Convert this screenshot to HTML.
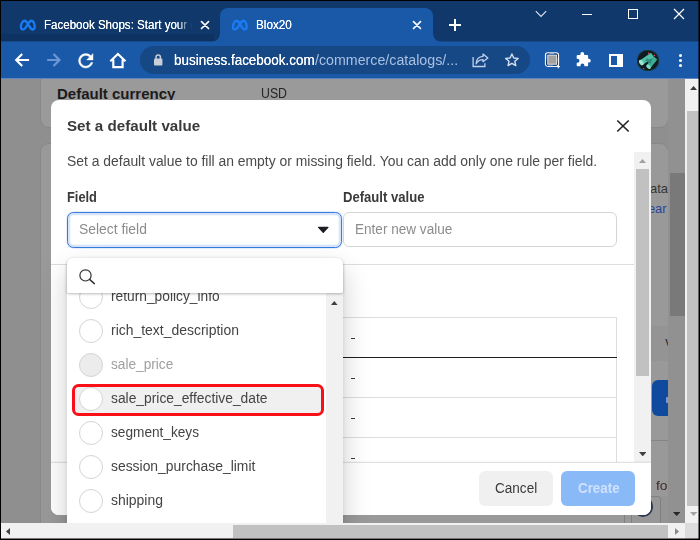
<!DOCTYPE html>
<html>
<head>
<meta charset="utf-8">
<title>Blox20</title>
<style>
html,body{margin:0;padding:0;}
body{width:700px;height:540px;overflow:hidden;background:#8f8f8f;font-family:"Liberation Sans",sans-serif;position:relative;}
.abs{position:absolute;}
.t{position:absolute;white-space:nowrap;}
.hl{position:absolute;height:1px;background:#dddddd;}
.dash{position:absolute;left:351.3px;width:3.8px;height:1px;background:#3a3a3a;}
.radio{position:absolute;left:79px;width:24px;height:24px;box-sizing:border-box;border:1px solid #d4d4d4;border-radius:50%;background:#fff;}
</style>
</head>
<body>

<!-- page behind overlay -->
<div class="abs" style="left:0;top:78px;width:700px;height:462px;background:#8f8f8f;"></div>
<div class="abs" style="left:41px;top:60px;width:627px;height:67px;background:#9a9a9a;border-radius:8px;box-shadow:0 0 0 1px #888888;"></div>
<div class="abs" style="left:41px;top:144px;width:627px;height:420px;background:#999999;border-radius:8px;box-shadow:0 0 0 1px #888888;"></div>
<div class="t" style="left:57px;top:84px;font-size:15px;line-height:20px;color:#1c1a1a;font-weight:bold;">Default currency</div>
<div class="t" style="left:261px;top:84px;font-size:14px;line-height:18px;color:#262626;transform:scaleX(0.88);transform-origin:0 0;">USD</div>
<div class="t" style="left:650px;top:181.4px;font-size:13px;line-height:16px;color:#363636;">ata</div>
<div class="t" style="left:647.9px;top:200.8px;font-size:13px;line-height:16px;color:#27489a;">ear</div>
<div class="abs" style="left:651px;top:325.6px;width:17px;height:35.4px;background:#949494;"></div>
<div class="t" style="left:665.2px;top:333.5px;font-size:13px;line-height:16px;color:#262626;">v</div>
<div class="abs" style="left:651.5px;top:380px;width:40px;height:36px;background:#0f4a9e;border-radius:6px 0 0 6px;"></div>
<div class="abs" style="left:651px;top:440px;width:17px;height:1px;background:#858585;"></div><div class="abs" style="left:665.5px;top:397px;width:3px;height:6px;background:#7d9bd0;border-radius:1px;"></div>
<div class="t" style="left:655.8px;top:478.1px;font-size:13px;line-height:16px;color:#40292a;transform:scaleX(1.06);transform-origin:0 0;">fo</div>
<div class="abs" style="left:631px;top:495.5px;width:29.5px;height:30px;border:1px solid #808080;border-radius:0 3px 0 0;box-sizing:border-box;background:#979797;"></div>
<div class="abs" style="left:661px;top:496px;width:7px;height:30px;background:#949494;"></div>
<div class="abs" style="left:624px;top:514px;width:1px;height:10px;background:#808080;"></div>
<div class="abs" style="left:632.7px;top:496.2px;width:20.6px;height:20.6px;border-radius:50%;border:2.6px solid #2e3654;box-sizing:border-box;background:#7d86a3;"></div>
<div class="abs" style="left:668px;top:78px;width:17px;height:445px;background:#919191;"></div>
<div class="abs" style="left:670px;top:173px;width:15px;height:142.5px;background:#797979;"></div>
<svg class="abs" style="left:673px;top:512px" width="7.4" height="4" viewBox="0 0 7.4 4"><path d="M0 0h7.4L3.7 4z" fill="#262626"/></svg>
<div class="abs" style="left:685px;top:78px;width:14px;height:445px;background:#f1f1f1;"></div>
<svg class="abs" style="left:689.9px;top:85.8px" width="7.2" height="4.1" viewBox="0 0 7.2 4.1"><path d="M0 4.1h7.2L3.6 0z" fill="#3a3a3a"/></svg>
<div class="abs" style="left:687px;top:111px;width:12px;height:395px;background:#c2c2c2;"></div>
<svg class="abs" style="left:690px;top:512px" width="7.2" height="4" viewBox="0 0 7.2 4"><path d="M0 0h7.2L3.6 4z" fill="#a3a3a3"/></svg>
<div class="abs" style="left:0;top:523px;width:685px;height:16px;background:#f1f1f1;"></div>
<div class="abs" style="left:685px;top:523px;width:14px;height:16px;background:#dcdcdc;"></div>
<svg class="abs" style="left:6px;top:527.9px" width="4.1" height="7" viewBox="0 0 4.1 7"><path d="M4.1 0v7L0 3.5z" fill="#404040"/></svg>
<div class="abs" style="left:233px;top:525px;width:435px;height:13px;background:#c1c1c1;"></div>
<svg class="abs" style="left:675px;top:528.2px" width="4.1" height="7" viewBox="0 0 4.1 7"><path d="M0 0v7l4.1-3.5z" fill="#8a8a8a"/></svg>
<!-- chrome -->
<div class="abs" style="left:0;top:0;width:700px;height:41px;background:#10386a;"></div>
<div class="abs" style="left:0;top:41px;width:700px;height:37px;background:#1a59a8;"></div>
<div class="abs" style="left:0;top:78px;width:700px;height:1px;background:#5f86bf;"></div>
<div class="abs" style="left:0;top:34px;width:214px;height:7px;background:#0e3362;"></div>
<div class="abs" style="left:0;top:41px;width:700px;height:1px;background:#154989;"></div>
<div class="abs" style="left:220px;top:8px;width:212.6px;height:34px;background:#1a59a8;border-radius:8px 8px 0 0;"></div>
<div class="abs" style="left:212px;top:33.5px;width:8px;height:8px;background:radial-gradient(circle at 0 0,rgba(26,89,168,0) 7.4px,#1a59a8 8.1px);"></div>
<div class="abs" style="left:432.6px;top:33.5px;width:8px;height:8px;background:radial-gradient(circle at 100% 0,rgba(26,89,168,0) 7.4px,#1a59a8 8.1px);"></div>
<svg class="abs" style="left:18.91px;top:19.29px" width="18.03" height="12.78" viewBox="0 0 20.6 14.6"><path d="M2.2 9.2C2.2 5.6 4 2 6.3 2c1.6 0 2.7 1.3 4 3.7C11.6 3.3 12.7 2 14.2 2c2.1 0 3.8 3.3 3.8 7 0 1.9-.9 3-2.3 3-1.5 0-2.4-1-4-3.8L10.3 5.7 8.6 8.3C7.1 10.9 6.1 12 4.6 12 3.1 12 2.2 10.9 2.2 9.2Z" fill="none" stroke="#1a7cf5" stroke-width="2.6" stroke-linejoin="round"/></svg>
<div class="t" style="left:43.6px;top:16.5px;font-size:12px;line-height:16px;color:#fff;transform:scaleX(0.962);transform-origin:0 0;width:158px;overflow:hidden;-webkit-mask-image:linear-gradient(90deg,#000 138px,transparent 154px);text-shadow:0 0 0.4px #fff;">Facebook Shops: Start your o</div>
<svg class="abs" style="left:200px;top:20px" width="10" height="10" viewBox="0 0 10 10"><path d="M1.5 1.7l7 6.8M8.5 1.7l-7 6.8" stroke="#fff" stroke-width="1.7" stroke-linecap="round"/></svg>
<svg class="abs" style="left:231.31px;top:19.29px" width="18.03" height="12.78" viewBox="0 0 20.6 14.6"><path d="M2.2 9.2C2.2 5.6 4 2 6.3 2c1.6 0 2.7 1.3 4 3.7C11.6 3.3 12.7 2 14.2 2c2.1 0 3.8 3.3 3.8 7 0 1.9-.9 3-2.3 3-1.5 0-2.4-1-4-3.8L10.3 5.7 8.6 8.3C7.1 10.9 6.1 12 4.6 12 3.1 12 2.2 10.9 2.2 9.2Z" fill="none" stroke="#1a7cf5" stroke-width="2.6" stroke-linejoin="round"/></svg>
<div class="t" style="left:255.8px;top:16.5px;font-size:12px;line-height:16px;color:#fff;transform:scaleX(0.975);transform-origin:0 0;text-shadow:0 0 0.4px #fff;">Blox20</div>
<svg class="abs" style="left:412px;top:20px" width="10" height="10" viewBox="0 0 10 10"><path d="M1.5 1.7l7 6.8M8.5 1.7l-7 6.8" stroke="#fff" stroke-width="1.7" stroke-linecap="round"/></svg>
<svg class="abs" style="left:447.5px;top:18px" width="14" height="14" viewBox="0 0 14 14"><path d="M7 1v12M1 7h12" stroke="#fff" stroke-width="2"/></svg>
<svg class="abs" style="left:534px;top:9px" width="14" height="10" viewBox="0 0 14 10"><path d="M1.8 2.2l5.2 5.2 5.2-5.2" fill="none" stroke="#dfe8f3" stroke-width="1.1"/></svg>
<div class="abs" style="left:582px;top:14px;width:10px;height:1px;background:#fff;"></div>
<div class="abs" style="left:628px;top:9px;width:8px;height:8px;border:1.2px solid #fff;"></div>
<svg class="abs" style="left:673px;top:8px" width="12" height="12" viewBox="0 0 12 12"><path d="M1 1l10 10M11 1L1 11" stroke="#fff" stroke-width="1.2"/></svg>
<svg class="abs" style="left:14px;top:52px" width="16" height="16" viewBox="0 0 16 16"><path d="M15.1 8H2.5M8.2 2L2.2 8l6 6" fill="none" stroke="#fff" stroke-width="2.15"/></svg>
<svg class="abs" style="left:46px;top:52px" width="16" height="16" viewBox="0 0 16 16"><path d="M1.2 8h12.2M7.5 2l6 6-6 6" fill="none" stroke="#6b97d6" stroke-width="2.15"/></svg>
<svg class="abs" style="left:75.2px;top:49.6px" width="21.6" height="21.6" viewBox="0 0 24 24"><path d="M17.65 6.35C16.2 4.9 14.21 4 12 4c-4.42 0-7.99 3.58-7.99 8s3.57 8 7.99 8c3.73 0 6.84-2.55 7.73-6h-2.08c-.82 2.33-3.04 4-5.65 4-3.31 0-6-2.69-6-6s2.69-6 6-6c1.66 0 3.14.69 4.22 1.78L13 11h7V4l-2.35 2.35z" fill="#fff" stroke="#fff" stroke-width="0.45"/></svg>
<svg class="abs" style="left:109px;top:51.5px" width="18" height="17" viewBox="0 0 18 17"><path d="M1.3 9.2L8.9 2l7.6 7.2M4.3 7.4V15.1h9.3V7.4" fill="none" stroke="#fff" stroke-width="2.15"/></svg>
<div class="abs" style="left:140px;top:46px;width:390px;height:28px;border-radius:14px;background:#164886;"></div>
<svg class="abs" style="left:154px;top:53.5px" width="9" height="12" viewBox="0 0 9 12"><rect x="0" y="4.6" width="8.4" height="6.8" rx="1" fill="#c8cfd8"/><path d="M2 5V3.3a2.2 2.2 0 0 1 4.4 0V5" fill="none" stroke="#c8cfd8" stroke-width="1.5"/></svg>
<div class="t" style="left:173.9px;top:51px;font-size:14px;line-height:18px;color:#fff;transform:scaleX(0.962);transform-origin:0 0;text-shadow:0 0 0.5px #fff;">business.facebook.com</div>
<div class="t" style="left:315.2px;top:51px;font-size:14px;line-height:18px;color:#a9c0e2;transform:scaleX(1.016);transform-origin:0 0;">/commerce/catalogs/...</div>
<svg class="abs" style="left:471px;top:51px" width="18" height="17" viewBox="0 0 18 17"><path d="M2.1 5.9V15.5H13.9V12.3" fill="none" stroke="#bfd0ea" stroke-width="1.3"/><path d="M12 3.1L16.9 7.1 12 10.7V8.6C9 8.6 6.6 9.8 5.1 12.8 5.3 8.4 7.8 5.6 12 5.4Z" fill="none" stroke="#bfd0ea" stroke-width="1.3" stroke-linejoin="round"/></svg>
<svg class="abs" style="left:504.3px;top:52.2px" width="15.8" height="15.8" viewBox="0 0 18 18"><path d="M9 2.2l2.1 4.6 5 .5-3.8 3.3 1.1 4.9L9 13l-4.4 2.5 1.1-4.9L1.9 7.3l5-.5z" fill="none" stroke="#d4e0f0" stroke-width="1.6" stroke-linejoin="round"/></svg>
<svg class="abs" style="left:543px;top:50px" width="20" height="20" viewBox="0 0 20 20"><rect x="2.5" y="2.799999999999997" width="13" height="13.5" rx="2.2" fill="none" stroke="#f4f4f4" stroke-width="1.2"/><rect x="3.7" y="4" width="10.6" height="11.1" rx="1" fill="none" stroke="#18222e" stroke-width="1.1" stroke-dasharray="3.2 4.7 3.2 0.1" stroke-dashoffset="1.6" opacity=".8"/><rect x="4.8" y="5.2" width="8.8" height="9" fill="#a1a1a1" stroke="#e6e6e6" stroke-width="0.9"/><path d="M13.6 16.6h3.4M15.3 14.9v3.4" stroke="#fff" stroke-width="1"/></svg>
<svg class="abs" style="left:574.3px;top:51.4px" width="17" height="16" viewBox="0 0 17 16"><path d="M6.4 3a1.9 1.9 0 0 1 3.8 0V4.1h2.9a1 1 0 0 1 1 1v2.6h.7a1.95 1.95 0 0 1 0 3.9h-.7v2.6a1 1 0 0 1-1 1h-2.7v-.8a1.95 1.95 0 0 0-3.9 0v.8H3.7a1 1 0 0 1-1-1v-2.5h.8a1.95 1.95 0 0 0 0-3.9h-.8V5.1a1 1 0 0 1 1-1h2.7z" fill="#fff"/></svg>
<div class="abs" style="left:609px;top:53.7px;width:14.3px;height:13px;box-sizing:border-box;border:2.1px solid #fff;background:linear-gradient(90deg,#1a59a8 6.5px,#fff 6.5px);"></div>
<div class="abs" style="left:637.3px;top:49.6px;width:21.6px;height:21.6px;border-radius:50%;background:#0f1b21;overflow:hidden;box-shadow:inset 0 0 0 0.8px #1d3a35;"><svg width="21.6" height="21.6" viewBox="0 0 21.6 21.6"><path d="M4.3 12.6L15.5 5" stroke="#4fbfa6" stroke-width="5.2" stroke-linecap="butt"/><path d="M11.3 17L18.5 8" stroke="#3fae97" stroke-width="4.6" stroke-linecap="butt"/><path d="M9.2 9.2L14.2 12.7" stroke="#2d8f7d" stroke-width="3"/><ellipse cx="4.3" cy="12.6" rx="1.9" ry="3" transform="rotate(-34 4.3 12.6)" fill="#9be6d3"/><ellipse cx="11.5" cy="16.8" rx="1.7" ry="2.6" transform="rotate(-50 11.5 16.8)" fill="#7fd9c4"/><circle cx="11.7" cy="3.4" r="0.9" fill="#d9475a"/><circle cx="17.3" cy="5.4" r="0.9" fill="#d9475a"/><circle cx="6.7" cy="18.6" r="0.7" fill="#c9606a"/></svg></div>
<div class="abs" style="left:678.9px;top:53.9px;width:3.2px;height:3.2px;border-radius:50%;background:#fff;box-shadow:0 5px 0 #fff,0 10px 0 #fff;"></div>
<!-- modal -->
<div class="abs" style="left:51px;top:100px;width:600px;height:415px;background:#fff;border-radius:8px;"></div>
<div class="t" style="left:67.2px;top:115.5px;font-size:15px;line-height:20px;color:#3a3a3a;font-weight:bold;transform:scaleX(1.011);transform-origin:0 0;">Set a default value</div>
<svg class="abs" style="left:615.9px;top:119px" width="14" height="14" viewBox="0 0 14 14"><path d="M1.3 1.5l11.4 11M12.7 1.5L1.3 12.5" stroke="#222" stroke-width="1.6"/></svg>
<div class="t" style="left:67.2px;top:152px;font-size:14px;line-height:18px;color:#4a4a4a;transform:scaleX(0.993);transform-origin:0 0;">Set a default value to fill an empty or missing field. You can add only one rule per field.</div>
<div class="t" style="left:67.4px;top:188px;font-size:14px;line-height:18px;color:#3a3a3a;font-weight:bold;transform:scaleX(0.917);transform-origin:0 0;">Field</div>
<div class="t" style="left:342.9px;top:188px;font-size:14px;line-height:18px;color:#3a3a3a;font-weight:bold;transform:scaleX(0.935);transform-origin:0 0;">Default value</div>
<div class="abs" style="left:67.2px;top:212px;width:275.2px;height:35.8px;box-sizing:border-box;border:1.5px solid #3a7ade;border-radius:6.5px;box-shadow:inset 0 0 0 2.3px #d7e5fb, 0 0 0 0.5px rgba(58,122,222,.25);background:#fff;"></div>
<div class="t" style="left:79.2px;top:220px;font-size:14px;line-height:18px;color:#8c8c8c;transform:scaleX(0.991);transform-origin:0 0;">Select field</div>
<svg class="abs" style="left:317px;top:226px" width="13" height="8" viewBox="0 0 13 8"><path d="M1.6 1.4h9.3L6.25 6.2z" fill="#1c1e21" stroke="#1c1e21" stroke-width="1.3" stroke-linejoin="round"/></svg>
<div class="abs" style="left:343px;top:212px;width:274px;height:35px;box-sizing:border-box;border:1px solid #d3d5d9;border-radius:6px;background:#fff;"></div>
<div class="t" style="left:354.9px;top:220px;font-size:14px;line-height:18px;color:#8c8c8c;transform:scaleX(0.969);transform-origin:0 0;">Enter new value</div>
<div class="hl" style="left:51px;top:264px;width:583px;"></div>
<div class="abs" style="left:67px;top:317px;width:550px;height:146px;border:1px solid #dddddd;border-bottom:none;box-sizing:border-box;"></div>
<div class="hl" style="left:67px;top:357px;width:550px;background:#1e1e1e;"></div>
<div class="hl" style="left:67px;top:397px;width:550px;"></div>
<div class="hl" style="left:67px;top:437px;width:550px;"></div>
<div class="dash" style="top:338px;"></div>
<div class="dash" style="top:378px;"></div>
<div class="dash" style="top:418px;"></div>
<div class="dash" style="top:458px;"></div>
<div class="abs" style="left:634px;top:152px;width:17px;height:310px;background:#f1f1f1;"></div>
<svg class="abs" style="left:639px;top:159px" width="7" height="4" viewBox="0 0 7 4"><path d="M0 4h7L3.5 0z" fill="#a0a0a0"/></svg>
<div class="abs" style="left:636px;top:169px;width:13px;height:207px;background:#c1c1c1;"></div>
<svg class="abs" style="left:638.7px;top:451.7px" width="7.5" height="4.4" viewBox="0 0 7.5 4.4"><path d="M0 0h7.5L3.75 4.4z" fill="#404040"/></svg>
<div class="abs" style="left:51px;top:462px;width:600px;height:53px;background:#fff;border-radius:0 0 8px 8px;border-top:1px solid #e1e1e1;box-sizing:border-box;box-shadow:0 -1px 1px rgba(0,0,0,.03);"></div>
<div class="abs" style="left:479px;top:471px;width:74px;height:35px;border-radius:6px;background:#f0f0f0;"></div>
<div class="t" style="left:495.2px;top:471px;font-size:14px;line-height:34px;color:#3a3a3a;transform:scaleX(0.968);transform-origin:0 0;">Cancel</div>
<div class="abs" style="left:561px;top:471px;width:74px;height:35px;border-radius:6px;background:#8ab9f8;"></div>
<div class="t" style="left:577.5px;top:471px;font-size:14px;line-height:34px;color:#cfe2fc;font-weight:bold;transform:scaleX(0.955);transform-origin:0 0;">Create</div>
<!-- dropdown -->
<div class="abs" style="left:0;top:0;width:685px;height:523px;overflow:hidden;">
<div class="abs" style="left:67px;top:258px;width:275.5px;height:300px;background:#fff;border-radius:6px 6px 0 0;box-shadow:0 12px 28px rgba(0,0,0,.2),0 2px 4px rgba(0,0,0,.1);"></div>
<div class="abs" style="left:67px;top:293px;width:275.5px;height:230px;overflow:hidden;">
<div class="abs" style="left:4.8px;top:91px;width:252.2px;height:32px;box-sizing:border-box;border:3px solid #f80f17;border-radius:6.5px;background:#f0f0f0;"></div>
<div class="radio" style="left:12px;top:-8.3px;"></div>
<div class="t" style="left:44.4px;top:-5.9px;font-size:14px;line-height:18px;color:#444444;transform:scaleX(0.983);transform-origin:0 0;">return_policy_info</div>
<div class="radio" style="left:12px;top:25.7px;"></div>
<div class="t" style="left:44.4px;top:28.1px;font-size:14px;line-height:18px;color:#444444;transform:scaleX(0.9965);transform-origin:0 0;">rich_text_description</div>
<div class="radio" style="left:12px;top:59.7px;background:#ececec;"></div>
<div class="t" style="left:44.4px;top:62.1px;font-size:14px;line-height:18px;color:#a0a0a0;transform:scaleX(0.976);transform-origin:0 0;">sale_price</div>
<div class="radio" style="left:12px;top:93.7px;"></div>
<div class="t" style="left:44.4px;top:96.1px;font-size:14px;line-height:18px;color:#444444;transform:scaleX(0.987);transform-origin:0 0;">sale_price_effective_date</div>
<div class="radio" style="left:12px;top:127.7px;"></div>
<div class="t" style="left:44.4px;top:130.1px;font-size:14px;line-height:18px;color:#444444;transform:scaleX(0.975);transform-origin:0 0;">segment_keys</div>
<div class="radio" style="left:12px;top:161.7px;"></div>
<div class="t" style="left:44.4px;top:164.1px;font-size:14px;line-height:18px;color:#444444;transform:scaleX(0.992);transform-origin:0 0;">session_purchase_limit</div>
<div class="radio" style="left:12px;top:195.7px;"></div>
<div class="t" style="left:44.4px;top:198.1px;font-size:14px;line-height:18px;color:#444444;transform:scaleX(0.996);transform-origin:0 0;">shipping</div>
<div class="abs" style="left:259px;top:0;width:16.5px;height:230px;background:#f1f1f1;"></div>
<svg class="abs" style="left:264.2px;top:8.2px" width="6.6" height="4" viewBox="0 0 6.6 4"><path d="M0 4h6.6L3.3 0z" fill="#404040"/></svg>
</div>
<div class="abs" style="left:67px;top:258px;width:275.5px;height:35.3px;background:#fff;border-radius:6px 6px 2px 2px;box-shadow:0 1px 3px rgba(0,0,0,.28);"></div>
<svg class="abs" style="left:78px;top:268px" width="18" height="18" viewBox="0 0 18 18"><circle cx="7.5" cy="7.4" r="5.6" fill="none" stroke="#333" stroke-width="1.2"/><path d="M11.6 11.4l4.7 4.2" stroke="#333" stroke-width="1.5" stroke-linecap="round"/></svg>
</div>
<div class="abs" style="left:0;top:0;width:700px;height:1px;background:#000;"></div>
<div class="abs" style="left:0;top:0;width:1px;height:540px;background:#000;"></div>
<div class="abs" style="left:699px;top:0;width:1px;height:540px;background:#000;"></div>
<div class="abs" style="left:698px;top:0;width:1px;height:540px;background:rgba(0,0,0,.5);"></div>
<div class="abs" style="left:0;top:539px;width:700px;height:1px;background:#000;"></div>
<div class="abs" style="left:0;top:538px;width:700px;height:1px;background:rgba(0,0,0,.5);"></div>
</body>
</html>
